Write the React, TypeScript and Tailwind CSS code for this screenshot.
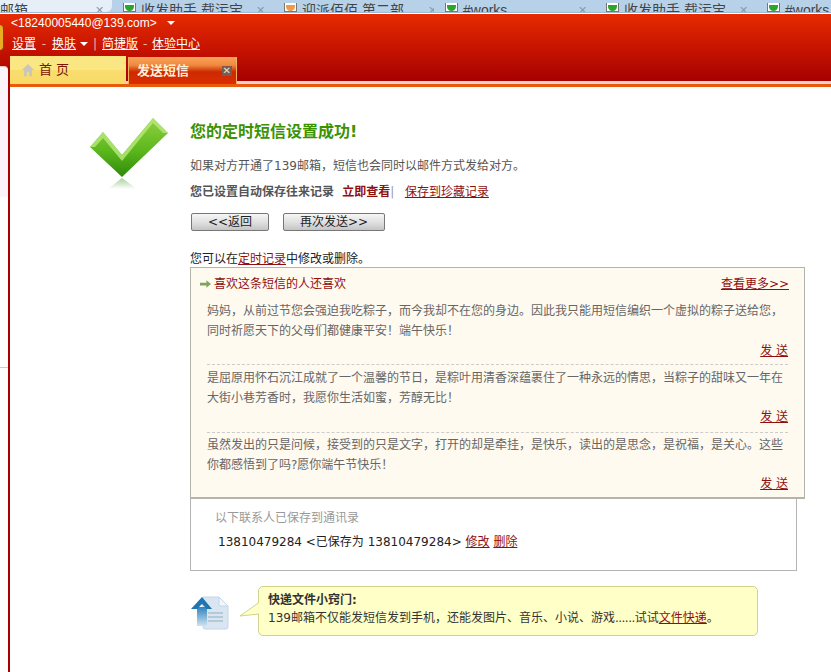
const FONT = 'font-["DejaVu_Sans","Noto_Sans_CJK_SC",sans-serif]'

const browserTabs = [
  { w: 'w-[112px]', text: '邮箱', active: true, icon: '' },
  { w: 'w-[161px]', text: '收发助手 载污宝', active: false, icon: 'green' },
  { w: 'w-[161px]', text: '迎派佰佰 第二部_...', active: false, icon: 'orange' },
  { w: 'w-[161px]', text: '#works', active: false, icon: 'green' },
  { w: 'w-[161px]', text: '收发助手 载污宝', active: false, icon: 'green' },
  { w: 'w-[75px]', text: '#works', active: false, icon: 'green' },
]

const messages = [
  {
    lines: ['妈妈，从前过节您会强迫我吃粽子，而今我却不在您的身边。因此我只能用短信编织一个虚拟的粽子送给您，', '同时祈愿天下的父母们都健康平安！端午快乐！'],
    box: 'h-[66px] pt-[2px] border-b border-dashed border-[#cccccc]',
    send: '',
  },
  {
    lines: ['是屈原用怀石沉江成就了一个温馨的节日，是粽叶用清香深蕴裹住了一种永远的情思，当粽子的甜味又一年在', '大街小巷芳香时，我愿你生活如蜜，芳醇无比！'],
    box: 'h-[68px] pt-[3px] border-b border-dashed border-[#cccccc]',
    send: '-mt-px',
  },
  {
    lines: ['虽然发出的只是问候，接受到的只是文字，打开的却是牵挂，是快乐，读出的是思念，是祝福，是关心。这些', '你都感悟到了吗?愿你端午节快乐！'],
    box: 'h-[62px] pt-[2px]',
    send: '-mt-px',
  },
]

function BrowserTabs() {
  return (
    <div className='flex h-[13px] overflow-hidden bg-[#b7d1e8] border-b border-[#9dbbd4] font-["Liberation_Sans","Noto_Sans_CJK_SC",sans-serif]'>
      {browserTabs.map((t, i) => (
        <div key={i} className={`${t.w} shrink-0 flex items-end gap-[5px] pr-[8px] overflow-hidden ${t.active ? 'bg-[#e6eff7] rounded-br-md pl-0' : 'pl-[11px]'}`}>
          {t.icon && (
            <span className="w-[13px] h-[9px] shrink-0 border border-t-0 border-[#777] bg-white flex items-end justify-center">
              <span className={`w-[9px] h-[6px] rounded-b-full ${t.icon === 'green' ? 'bg-[#2ba52b]' : 'bg-[#ef9a4a]'}`} />
            </span>
          )}
          <span className="text-[14px] leading-[16px] -mb-[6px] text-[#444] whitespace-nowrap flex-1">{t.text}</span>
          <span className="text-[11px] leading-[12px] -mb-[4px] text-[#8899aa]">✕</span>
        </div>
      ))}
    </div>
  )
}

function Caret({ className = '' }: { className?: string }) {
  return <span className={`inline-block w-0 h-0 border-x-[4px] border-x-transparent border-t-[4px] border-t-white ${className}`} />
}

function Header() {
  return (
    <div className="relative h-[67px] mt-px bg-[linear-gradient(#e62c00,#c81400_50%,#a60000_100%)] text-white">
      <div className="absolute left-0 top-[11px] w-[4px] h-[25px] rounded-r-sm bg-[#e8b020] border-r border-[#7a4a00]" />
      <div className='pl-[11px] pt-[1px] h-[17px] flex items-center text-[12px] leading-[16px] font-["Liberation_Sans",sans-serif]'>
        <span>&lt;18240005440@139.com&gt;</span>
        <Caret className="ml-[10px]" />
      </div>
      <div className="pl-[12px] mt-[4px] h-[18px] flex items-center text-[12px] leading-[16px]">
        <span className="underline">设置</span>
        <span className="w-[16px] text-center text-[#f3b3a0]">-</span>
        <span className="underline">换肤</span>
        <Caret className="ml-[4px]" />
        <span className="w-[14px] text-center text-[#f3b3a0]">|</span>
        <span className="underline">简捷版</span>
        <span className="w-[14px] text-center text-[#f3b3a0]">-</span>
        <span className="underline">体验中心</span>
      </div>
      <div className="absolute left-[10px] right-0 bottom-0 flex items-end">
        <div className="w-[116px] h-[28px] mb-[-3px] z-10 flex items-center bg-[linear-gradient(#fbe684_0%,#fbe684_50%,#f9dd6d_50%,#f8da68_100%)]">
          <svg viewBox="0 0 16 16" className="w-[14px] h-[14px] ml-[11px]" fill="#c9c6bd">
            <path d="M8 1 1 8h2.500v7h3.200v-4.500h2.600V15h3.200V8H15z" />
          </svg>
          <span className="ml-[4px] text-[13px] text-[#7a1500] tracking-[4px]">首页</span>
        </div>
        <div className="ml-[2px] w-[109px] h-[27px] mb-[-3px] z-10 flex items-center justify-between pl-[8px] pr-[4px] bg-[linear-gradient(#f9a35a_0%,#f08a40_30%,#cc2a00_55%,#dd2c00_100%)] border-x border-[#f3b15c]">
          <span className="text-[13px] font-bold text-[#fff2dc]">发送短信</span>
          <span className="text-[10px] font-bold leading-none text-[#e8e0d8] bg-[#7d5a4c] px-[1px]">✕</span>
        </div>
      </div>
    </div>
  )
}

function CheckIcon() {
  return (
    <svg viewBox="0 0 78 72" className="w-[78px] h-[72px] shrink-0">
      <defs>
        <linearGradient id="chk" x1="0" y1="0" x2="0" y2="1">
          <stop offset="0" stopColor="#8fd040" />
          <stop offset="0.55" stopColor="#5cb81c" />
          <stop offset="1" stopColor="#2e8a0a" />
        </linearGradient>
        <linearGradient id="chkShadow" x1="0" y1="0" x2="0" y2="1">
          <stop offset="0" stopColor="#8cc078" />
          <stop offset="1" stopColor="#ffffff" />
        </linearGradient>
      </defs>
      <path d="M0 29 13 14 32 37 63 0 78 15 32 59Z" fill="url(#chk)" />
      <path d="M0 29 13 14 32 37 63 0 78 15 73 15 63 5 32 43 13 20 5 29Z" fill="#b4e678" opacity="0.85" />
      <path d="M32 60 18 71H47Z" fill="url(#chkShadow)" opacity="0.75" />
    </svg>
  )
}

function DocIcon() {
  return (
    <svg viewBox="0 0 40 40" className="w-[40px] h-[40px] shrink-0 mt-[8px]">
      <defs>
        <linearGradient id="stem" x1="0" y1="0" x2="0" y2="1">
          <stop offset="0" stopColor="#2f83bf" />
          <stop offset="1" stopColor="#cfe2f0" />
        </linearGradient>
      </defs>
      <path d="M13 3h16l9 9v21a2 2 0 0 1-2 2H15a2 2 0 0 1-2-2Z" fill="#d9e6f1" stroke="#c4d6e6" />
      <path d="M29 3v9h9Z" fill="#f2f6fa" stroke="#c4d6e6" />
      <path d="M18 19h15M18 23h15M18 27h15" stroke="#93abc1" strokeWidth="1.2" />
      <path d="M7 13h10v19H7Z" fill="url(#stem)" />
      <path d="M12 3 1 15h6l5-5 5 5h5Z" fill="#1f74b2" />
    </svg>
  )
}

function Link({ children, className = '' }: { children: React.ReactNode; className?: string }) {
  return <span className={`underline text-[#8f0f0f] ${className}`}>{children}</span>
}

function GrayButton({ children, className }: { children: React.ReactNode; className: string }) {
  return (
    <button className={`${className} h-[18px] rounded-[2px] border border-[#777] bg-[linear-gradient(#f6f6f6,#dcdcdc_60%,#c4c4c4)] text-[12px] leading-[16px] text-[#222]`}>
      {children}
    </button>
  )
}

export default function App() {
  return (
    <div className={`${FONT} w-[831px] h-[672px] overflow-hidden bg-white text-[12px] leading-[20px] text-[#333]`}>
      <BrowserTabs />
      <Header />
      <div className="h-[3px] bg-[#f8cfc8]" />
      <div className="h-[3px] bg-[#e95a0c]" />

      <div className="flex">
        {/* left rail */}
        <div className="relative w-[8px] shrink-0 -mt-[21px]">
          <div className="h-[131px] bg-[#fdf4fb] border-t border-[#f0c8c0] rounded-tr-sm" />
          <div className="h-[170px] bg-white" />
          <div className="h-px bg-[#cccccc]" />
        </div>
        <div className="relative w-[2px] h-[611px] -mt-[21px] shrink-0 bg-[#a80000]" />

        <div className="flex-1 pl-[80px] pt-[31px]">
          <div className="flex">
            <CheckIcon />
            <div className="ml-[22px] -mt-[1px]">
              <h1 className="text-[16px] leading-[26px] font-bold text-[#3d9200] mt-[2px]">您的定时短信设置成功!</h1>
              <p className="mt-[11px] text-[#555]">如果对方开通了139邮箱，短信也会同时以邮件方式发给对方。</p>
              <p className="mt-[6px] whitespace-pre">
                <span className="font-bold text-[#555]">您已设置自动保存往来记录 </span>
                <span className="ml-[4px] font-bold text-[#8f0f0f]">立即查看</span>
                <span className="text-[#999]">|  </span>
                <Link className="ml-[3px]">保存到珍藏记录</Link>
              </p>
            </div>
          </div>

          <div className="ml-[101px] mt-[11px] flex gap-[14px]">
            <GrayButton className="w-[78px]">&lt;&lt;返回</GrayButton>
            <GrayButton className="w-[102px]">再次发送&gt;&gt;</GrayButton>
          </div>

          <p className="ml-[100px] mt-[20px] text-[#222] leading-[16px]">
            您可以在<Link>定时记录</Link>中修改或删除。
          </p>

          <div className="ml-[100px] w-[615px] h-[232px] border border-[#b4b4aa] border-b-2 bg-[#fffaf0]">
            <div className="h-[31px] flex items-center justify-between pl-[9px] pr-[15px]">
              <div className="flex items-center text-[#8f0f0f]">
                <svg viewBox="0 0 12 8" className="w-[11px] h-[8px] mr-[3px]">
                  <path d="M0 2.500h7V0l5 4-5 4V5.500H0Z" fill="#7ea65a" />
                </svg>
                喜欢这条短信的人还喜欢
              </div>
              <Link>查看更多&gt;&gt;</Link>
            </div>
            {messages.map((m, i) => (
              <div key={i} className={`${m.box} mx-[16px]`}>
                {m.lines.map((l) => (
                  <p key={l} className="whitespace-nowrap text-[#666]">{l}</p>
                ))}
                <p className={`text-right ${m.send}`}>
                  <Link>发 送</Link>
                </p>
              </div>
            ))}
          </div>

          <div className="ml-[100px] w-[607px] h-[72px] border border-t-0 border-[#b4b4b4] pl-[24px] pt-[9px]">
            <p className="text-[#999]">以下联系人已保存到通讯录</p>
            <p className="mt-[4px] ml-[3px] whitespace-nowrap text-[#222]">
              13810479284 &lt;已保存为 13810479284&gt; <Link>修改</Link> <Link>删除</Link>
            </p>
          </div>

          <div className="ml-[100px] mt-[15px] flex items-start">
            <DocIcon />
            <div className="relative ml-[28px] w-[500px] h-[50px] rounded-[5px] border border-[#d2d28c] bg-[#ffffc8] pl-[9px] pt-[4px] leading-[18px] text-[#333]">
              <svg viewBox="0 0 20 16" className="absolute left-[-20px] top-[15px] w-[20px] h-[16px]">
                <path d="M20 0.500 1 14 20 12" fill="#ffffc8" stroke="#d2d28c" />
              </svg>
              <p className="font-bold">快递文件小窍门:</p>
              <p className="whitespace-nowrap">139邮箱不仅能发短信发到手机，还能发图片、音乐、小说、游戏<span className="tracking-[-0.5px]">......</span>试试<Link>文件快递</Link>。</p>
            </div>
          </div>
        </div>
      </div>
    </div>
  )
}
